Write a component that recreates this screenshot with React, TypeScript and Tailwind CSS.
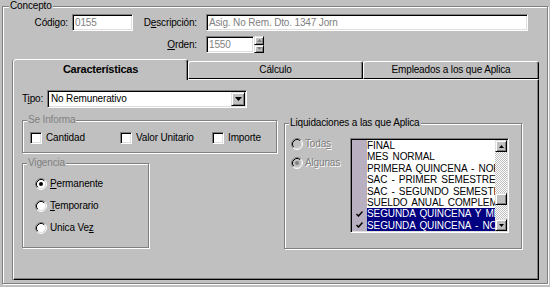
import React from "react";

const sunken =
  "border border-t-[#808080] border-l-[#808080] border-b-white border-r-white shadow-[inset_1px_1px_0_#000,inset_-1px_-1px_0_#dfdfdf]";
const raised =
  "border border-t-[#dfdfdf] border-l-[#dfdfdf] border-b-black border-r-black shadow-[inset_1px_1px_0_#fff,inset_-1px_-1px_0_#808080]";
const etched = "border border-[#808080] shadow-[inset_1px_1px_0_#fff,1px_1px_0_#fff]";

function Group({
  label,
  className,
  labelClass,
  children,
}: {
  label: string;
  className: string;
  labelClass?: string;
  children?: React.ReactNode;
}) {
  return (
    <div className={`relative ${etched} ${className}`}>
      <span
        className={`absolute -top-[7px] left-[4px] px-[1px] bg-[#c0c0c0] leading-[12px] whitespace-nowrap ${labelClass ?? ""}`}
      >
        {label}
      </span>
      {children}
    </div>
  );
}

function Radio({ checked, disabled }: { checked?: boolean; disabled?: boolean }) {
  return (
    <svg width="12" height="12" viewBox="0 0 12 12" className="shrink-0">
      <circle cx="6" cy="6" r="4.5" fill={disabled ? "#c0c0c0" : "#fff"} />
      <path d="M2.11 9.89 A5.5 5.5 0 0 1 9.89 2.11" stroke="#808080" fill="none" />
      <path d="M9.89 2.11 A5.5 5.5 0 0 1 2.11 9.89" stroke="#fff" fill="none" />
      <path d="M2.82 9.18 A4.5 4.5 0 0 1 9.18 2.82" stroke="#000" fill="none" />
      <path d="M9.18 2.82 A4.5 4.5 0 0 1 2.82 9.18" stroke="#dfdfdf" fill="none" />
      {checked && <circle cx="6" cy="6" r="2" fill={disabled ? "#808080" : "#000"} />}
    </svg>
  );
}

function Check() {
  return <span className={`w-[12px] h-[12px] bg-white shrink-0 ${sunken}`} />;
}

function Tri({ up, color = "#000", w = 7, h = 4 }: { up?: boolean; color?: string; w?: number; h?: number }) {
  return (
    <svg width={w} height={h} viewBox={`0 0 ${w} ${h}`}>
      {up ? (
        <polygon points={`0,${h} ${w},${h} ${w / 2},0`} fill={color} />
      ) : (
        <polygon points={`0,0 ${w},0 ${w / 2},${h}`} fill={color} />
      )}
    </svg>
  );
}

const items: { t: string; sel?: boolean }[] = [
  { t: "FINAL" },
  { t: "MES NORMAL" },
  { t: "PRIMERA QUINCENA - NORMAL" },
  { t: "SAC - PRIMER SEMESTRE" },
  { t: "SAC - SEGUNDO SEMESTRE" },
  { t: "SUELDO ANUAL COMPLEMENTARIO" },
  { t: "SEGUNDA QUINCENA Y MES", sel: true },
  { t: "SEGUNDA QUINCENA - NORMAL", sel: true },
];

export default function App() {
  return (
    <div className="w-[550px] h-[287px] bg-[#c0c0c0] pl-[2px] pt-[6px] overflow-hidden font-['Liberation_Sans',Arial,sans-serif] text-[10px] leading-[12px] text-black tracking-[-0.15px]">
      <Group label="Concepto" className="w-[546px] h-[278px]" labelClass="left-[6px]">
        {/* Row 1 */}
        <div className="flex items-center mt-[7px] h-[17px]">
          <span className="w-[65px] text-right">
            Códi<span className="underline">g</span>o:
          </span>
          <div className={`ml-[4px] w-[61px] h-[17px] bg-white text-[#808080] pl-[2px] flex items-center ${sunken}`}>
            0155
          </div>
          <span className="w-[64px] text-right">
            D<span className="underline">e</span>scripción:
          </span>
          <div className={`ml-[9px] w-[322px] h-[17px] bg-white text-[#808080] pl-[2px] flex items-center ${sunken}`}>
            Asig. No Rem. Dto. 1347 Jorn
          </div>
        </div>
        {/* Row 2 */}
        <div className="flex items-center mt-[5px] h-[17px]">
          <span className="w-[194px] text-right">
            <span className="underline">O</span>rden:
          </span>
          <div className={`ml-[9px] w-[48px] h-[17px] bg-white text-[#808080] pl-[2px] flex items-center ${sunken}`}>
            1550
          </div>
          <div className="flex flex-col w-[10px] h-[17px]">
            <div className={`flex-1 bg-[#c0c0c0] flex items-center justify-center ${raised}`}>
              <Tri up color="#808080" w={5} h={3} />
            </div>
            <div className={`flex-1 bg-[#c0c0c0] flex items-center justify-center ${raised}`}>
              <Tri color="#808080" w={5} h={3} />
            </div>
          </div>
        </div>

        {/* Tabs */}
        <div className="ml-[10px] mt-[6px] w-[526px]">
          <div className="flex items-end h-[20px]">
            <div className="relative z-10 -mb-px h-[21px] w-[175px] bg-[#c0c0c0] border-t border-l border-r border-t-white border-l-white border-r-black rounded-t-[3px] shadow-[inset_-1px_0_0_#808080,-1px_0_0_#808080] flex items-center justify-center pb-[2px] font-bold text-[11px] tracking-[-0.25px]">
              Características
            </div>
            <div className="h-[18px] w-[175px] bg-[#c0c0c0] border border-t-white border-l-white border-r-black border-b-black rounded-t-[3px] shadow-[inset_-1px_0_0_#808080] flex items-center justify-center">
              Cálculo
            </div>
            <div className="h-[18px] w-[176px] bg-[#c0c0c0] border border-t-white border-l-white border-r-black border-b-black rounded-t-[3px] shadow-[inset_-1px_0_0_#808080] flex items-center justify-center">
              Empleados a los que Aplica
            </div>
          </div>
          <div className="h-[201px] bg-[#c0c0c0] border border-t-white border-l-white border-r-black border-b-black shadow-[inset_-1px_-1px_0_#808080,-1px_0_0_#808080] flex pl-[8px] pt-[10px]">
            {/* Left column */}
            <div className="w-[255px] flex flex-col">
              <div className="flex items-center h-[18px]">
                <span className="w-[25px]">
                  T<span className="underline">i</span>po:
                </span>
                <div className={`w-[200px] h-[18px] bg-white flex items-center p-[1px] ${sunken}`}>
                  <span className="flex-1 pl-[2px]">No Remunerativo</span>
                  <span className={`w-[14px] h-full bg-[#c0c0c0] flex items-center justify-center ${raised}`}>
                    <Tri />
                  </span>
                </div>
              </div>
              <Group label="Se Informa" className="mt-[12px] w-[255px] h-[33px]" labelClass="text-[#808080]">
                <div className="flex items-center pl-[7px] pt-[11px]">
                  <div className="w-[90px] flex items-center">
                    <Check />
                    <span className="ml-[4px]">Cantidad</span>
                  </div>
                  <div className="w-[92px] flex items-center">
                    <Check />
                    <span className="ml-[4px]">Valor Unitario</span>
                  </div>
                  <div className="flex items-center">
                    <Check />
                    <span className="ml-[4px]">Importe</span>
                  </div>
                </div>
              </Group>
              <Group label="Vigencia" className="mt-[10px] w-[127px] h-[85px]" labelClass="text-[#808080]">
                <div className="flex flex-col gap-[10px] pl-[12px] pt-[14px]">
                  <div className="flex items-center h-[12px]">
                    <Radio checked />
                    <span className="ml-[3px]">
                      <span className="underline">P</span>ermanente
                    </span>
                  </div>
                  <div className="flex items-center h-[12px]">
                    <Radio />
                    <span className="ml-[3px]">
                      <span className="underline">T</span>emporario
                    </span>
                  </div>
                  <div className="flex items-center h-[12px]">
                    <Radio />
                    <span className="ml-[3px]">
                      Unica Ve<span className="underline">z</span>
                    </span>
                  </div>
                </div>
              </Group>
            </div>
            {/* Right column */}
            <div className="ml-[7px] mt-[33px]">
              <Group label="Liquidaciones a las que Aplica" className="w-[238px] h-[126px]" labelClass="left-[3px]">
                <div className="flex pt-[14px] pl-[6px]">
                  <div className="w-[59px] flex flex-col text-[#808080] [text-shadow:1px_1px_0_#fff]">
                    <div className="flex items-center h-[12px]">
                      <Radio disabled />
                      <span className="ml-[2px]">
                        Toda<span className="underline">s</span>
                      </span>
                    </div>
                    <div className="flex items-center h-[12px] mt-[7px]">
                      <Radio disabled checked />
                      <span className="ml-[2px]">Algunas</span>
                    </div>
                  </div>
                  <div className={`w-[159px] h-[95px] bg-white flex p-[1px] ${sunken}`}>
                    <div className="flex-1 flex flex-col overflow-hidden">
                      {items.map((it) => (
                        <div key={it.t} className="flex h-[11.375px] shrink-0">
                          <div className="w-[15px] bg-[#b8b0c0] flex items-center justify-center shrink-0">
                            {it.sel && (
                              <svg width="7" height="6" viewBox="0 0 7 6">
                                <path d="M0.5 3 L2.5 5 L6.5 0.5" stroke="#000" strokeWidth="1.5" fill="none" />
                              </svg>
                            )}
                          </div>
                          <div
                            className={`flex-1 overflow-hidden whitespace-nowrap text-[10px] leading-[11.375px] tracking-[-0.1px] [word-spacing:1.5px] ${
                              it.sel ? "bg-[#000080] text-white" : ""
                            }`}
                          >
                            {it.t}
                          </div>
                        </div>
                      ))}
                    </div>
                    <div className="w-[12px] flex flex-col shrink-0">
                      <div className={`h-[12px] bg-[#c0c0c0] flex items-center justify-center ${raised}`}>
                        <Tri up w={5} h={3} />
                      </div>
                      <div className="flex-1 bg-[image:repeating-conic-gradient(#c0c0c0_0%_25%,#ffffff_0%_50%)] bg-[length:2px_2px]">
                        <div className={`h-[12px] mt-[41px] bg-[#c0c0c0] ${raised}`} />
                      </div>
                      <div className={`h-[12px] bg-[#c0c0c0] flex items-center justify-center ${raised}`}>
                        <Tri w={5} h={3} />
                      </div>
                    </div>
                  </div>
                </div>
              </Group>
            </div>
          </div>
        </div>
      </Group>
    </div>
  );
}
